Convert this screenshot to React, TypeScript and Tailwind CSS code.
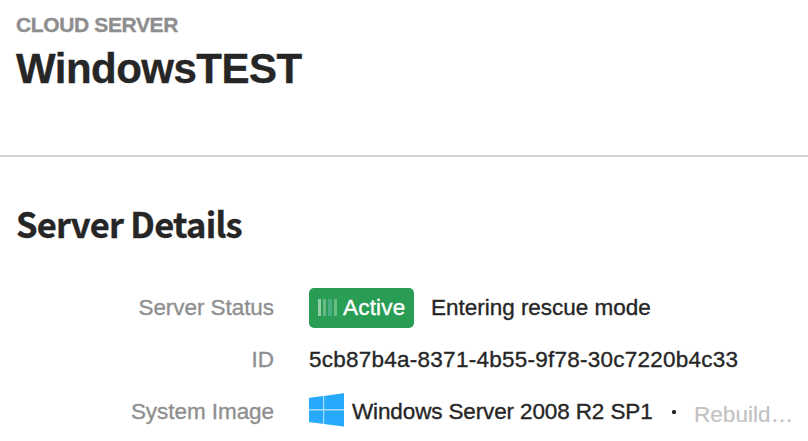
import type { ReactNode } from "react";

function WindowsLogo() {
  return (
    <svg className="mb-1 block h-[34px] w-[35px] shrink-0" viewBox="0 0 35 34" aria-hidden="true">
      <path d="M0 4.9 L35 0.3 V33.5 L0 29 Z" fill="#a5ddff" />
      <path d="M0 4.9 L14 3.1 V16 H0 Z M15.2 2.9 L35 0.3 V16 H15.2 Z M0 17.4 H14 V30.8 L0 29 Z M15.2 17.4 H35 V33.5 L15.2 31 Z" fill="#27aafb" />
    </svg>
  );
}

function StatusBars() {
  return (
    <span className="mb-[2px] flex h-[17px] w-[19px] shrink-0 gap-[2px]">
      <span className="w-[3px] bg-[#93cea9]" />
      <span className="w-[3px] bg-[#69ba87]" />
      <span className="w-[4px] bg-[#4bae80]" />
      <span className="w-[3px] bg-[#69ba87]" />
    </span>
  );
}

function Row({ label, children }: { label: string; children: ReactNode }) {
  return (
    <div className="flex h-[52px] items-center">
      <dt className="w-[274px] shrink-0 text-right tracking-[-0.06px] text-[#8f8f8f]">{label}</dt>
      <dd className="ml-[35px] flex items-center">{children}</dd>
    </div>
  );
}

export default function App() {
  return (
    <main className="h-[441px] w-[808px] overflow-hidden bg-white font-['Liberation_Sans',Arial,sans-serif] text-[22.5px] leading-[28px] text-[#262626] [-webkit-text-stroke:0.35px_currentColor]">
      <header className="h-[157px] border-b-2 border-[#d5d5d5] pt-[13px] pl-4">
        <p className="text-[21px] leading-[24px] font-bold tracking-[-0.37px] text-[#8e8e8e]">CLOUD SERVER</p>
        <h1 className="mt-2 text-[42px] leading-[48px] font-bold tracking-[-0.52px]">WindowsTEST</h1>
      </header>
      <section>
        <h2 className="h-[125px] pt-[41px] pl-4 font-['Noto_Sans_CJK_SC','Noto_Sans',sans-serif] text-[34.5px] leading-[50px] font-bold tracking-[-0.75px]">Server Details</h2>
        <dl className="whitespace-nowrap">
          <Row label="Server Status">
            <span className="flex h-[40px] w-[105px] items-center gap-[6px] rounded-[5px] bg-[#299d54] pl-[9px] tracking-[0.2px] text-white">
              <StatusBars />
              Active
            </span>
            <span className="ml-[17px] tracking-[-0.02px]">Entering rescue mode</span>
          </Row>
          <Row label="ID"><span className="tracking-[0.25px]">5cb87b4a-8371-4b55-9f78-30c7220b4c33</span></Row>
          <Row label="System Image">
            <WindowsLogo />
            <span className="ml-2 w-[302px] tracking-[-0.13px]">Windows Server 2008 R2 SP1</span>
            <span className="ml-[18px] h-[4px] w-[4px] shrink-0 rounded-[1.5px] bg-[#262626]" />
            <span className="ml-[18px] pt-[6px] tracking-[0.05px] text-[#c2c2c2] [-webkit-text-stroke:0.2px_currentColor]">Rebuild…</span>
          </Row>
        </dl>
      </section>
    </main>
  );
}
